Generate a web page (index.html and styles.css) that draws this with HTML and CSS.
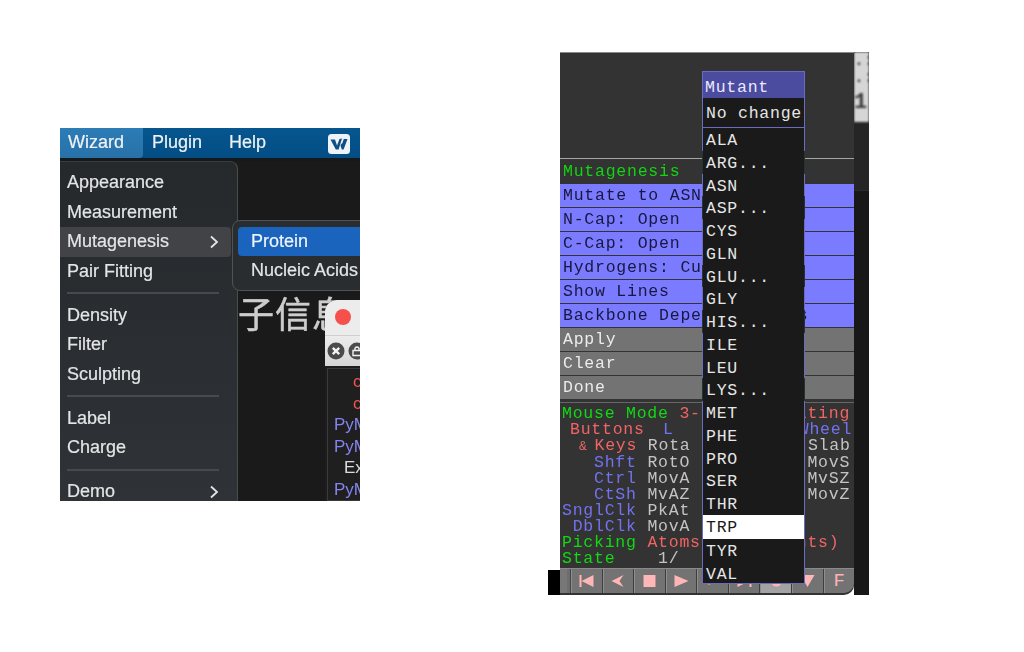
FILE: index.html
```html
<!DOCTYPE html>
<html lang="en">
<head>
<meta charset="utf-8">
<title>PyMOL Mutagenesis Wizard</title>
<link rel="stylesheet" href="styles.css">
</head>
<body>
<section class="shot-left">
  <header class="menubar">
    <span class="bar-item bar-active">Wizard</span>
    <span class="bar-item">Plugin</span>
    <span class="bar-item">Help</span>
    <svg class="wps" viewBox="0 0 22 20" aria-hidden="true">
      <rect width="22" height="20" rx="3.5" fill="#eef3f7"/>
      <path d="M2.5 5.5H7L9 11.5 11.5 5 14 4.6 10.6 15.5H7.8ZM12.4 11 13.8 15.5H15.6L19.5 5H15.8L14.4 9" fill="#0d4f86"/>
    </svg>
  </header>
  <div class="workspace">
    <nav class="menu">
      <div class="menu-item">Appearance</div>
      <div class="menu-item">Measurement</div>
      <div class="menu-item menu-hover">Mutagenesis<svg class="chev" viewBox="0 0 10 14"><path d="M2 1.5 8 7 2 12.5"/></svg></div>
      <div class="menu-item">Pair Fitting</div>
      <div class="menu-sep"></div>
      <div class="menu-item">Density</div>
      <div class="menu-item">Filter</div>
      <div class="menu-item">Sculpting</div>
      <div class="menu-sep"></div>
      <div class="menu-item">Label</div>
      <div class="menu-item">Charge</div>
      <div class="menu-sep"></div>
      <div class="menu-item">Demo<svg class="chev" viewBox="0 0 10 14"><path d="M2 1.5 8 7 2 12.5"/></svg></div>
    </nav>
    <div class="canvas">
      <div class="cjk">子信息</div>
    </div>
    <div class="submenu">
      <div class="sub-item sub-active">Protein</div>
      <div class="sub-item">Nucleic Acids</div>
    </div>
    <div class="mini">
      <div class="mini-title"><span class="dot"></span></div>
      <div class="mini-tools">
        <svg class="round" viewBox="0 0 18 18"><circle cx="9" cy="9" r="8.5" fill="#4a4a4a"/><path d="M5.8 5.8 12.2 12.2M12.2 5.8 5.8 12.2" stroke="#f2f2f2" stroke-width="2.4"/></svg>
        <svg class="round" viewBox="0 0 18 18"><circle cx="9" cy="9" r="8.5" fill="#4a4a4a"/><path d="M5 8.5H13V13.5H5ZM7 8V6.2Q9 3.8 11 6.2V8" fill="none" stroke="#f2f2f2" stroke-width="1.4"/></svg>
      </div>
      <div class="mini-log">
        <div class="log-red">c</div>
        <div class="log-red">c</div>
        <div class="log-blue">PyM</div>
        <div class="log-blue">PyM</div>
        <div class="log-white">Ex</div>
        <div class="log-blue">PyM</div>
      </div>
    </div>
  </div>
</section>

<section class="shot-right">
  <div class="gutter"></div>
  <div class="panel">
    <div class="viewport"></div>
    <div class="wiz-title">Mutagenesis</div>
    <div class="wiz-rows">
      <div class="row row-blue">Mutate to ASN</div>
      <div class="row row-blue">N-Cap: Open</div>
      <div class="row row-blue">C-Cap: Open</div>
      <div class="row row-blue">Hydrogens: Cu</div>
      <div class="row row-blue">Show Lines</div>
      <div class="row row-blue">Backbone Depe        rs</div>
      <div class="row row-gray">Apply</div>
      <div class="row row-gray">Clear</div>
      <div class="row row-gray">Done</div>
    </div>
    <div class="status">
      <div><span class="g">Mouse Mode</span> <span class="r">3-Button Editing</span></div>
      <div class="shift-btn"><span class="r">Buttons</span>  <span class="b nudge">L</span>            <span class="b nudge">Wheel</span></div>
      <div class="shift-key"><span class="amp">&amp;</span> <span class="r">Keys</span> <span class="w">Rota</span>           <span class="w">Slab</span></div>
      <div>   <span class="b">Shft</span> <span class="w">RotO</span>           <span class="w">MovS</span></div>
      <div>   <span class="b">Ctrl</span> <span class="w">MovA</span>           <span class="w">MvSZ</span></div>
      <div>   <span class="b">CtSh</span> <span class="w">MvAZ</span>           <span class="w">MovZ</span></div>
      <div><span class="b">SnglClk</span> <span class="w">PkAt</span></div>
      <div> <span class="b">DblClk</span> <span class="w">MovA</span></div>
      <div><span class="g">Picking</span> <span class="r">Atoms (and Joints)</span></div>
      <div><span class="g">State</span>    <span class="w">1/</span></div>
    </div>
    <div class="transport">
      <div class="handle"></div>
      <div class="tbtn"><svg viewBox="0 0 14 12"><path d="M0 0H2V12H0ZM14 0V12L2 6Z"/></svg></div>
      <div class="tbtn"><svg viewBox="0 0 14 12"><path d="M12 0 8 6 12 12 0 6Z"/></svg></div>
      <div class="tbtn"><svg viewBox="0 0 14 12"><path d="M1 0H13V12H1Z"/></svg></div>
      <div class="tbtn"><svg viewBox="0 0 14 12"><path d="M0 0 14 6 0 12Z"/></svg></div>
      <div class="tbtn"><svg viewBox="0 0 14 12"><path d="M2 2 10 6 2 10Z"/></svg></div>
      <div class="tbtn"><svg viewBox="0 0 14 12"><path d="M0 0 12 6 0 12ZM12 0H14V12H12Z"/></svg></div>
      <div class="tbtn tbtn-on"><svg viewBox="0 0 14 12"><circle cx="7" cy="6" r="5.5"/><circle cx="7" cy="6" r="3" fill="#a3a3a3"/></svg></div>
      <div class="tbtn"><svg viewBox="0 0 14 12"><path d="M0 0H14L7 12Z"/></svg></div>
      <div class="tbtn tbtn-last">F</div>
    </div>
    <div class="popup">
      <div class="pop-head">Mutant</div>
      <div class="pop-none">No change</div>
      <div class="pop-list">
        <div class="pop-item">ALA</div>
        <div class="pop-item more">ARG...</div>
        <div class="pop-item">ASN</div>
        <div class="pop-item more">ASP...</div>
        <div class="pop-item">CYS</div>
        <div class="pop-item">GLN</div>
        <div class="pop-item more">GLU...</div>
        <div class="pop-item">GLY</div>
        <div class="pop-item more">HIS...</div>
        <div class="pop-item">ILE</div>
        <div class="pop-item">LEU</div>
        <div class="pop-item more">LYS...</div>
        <div class="pop-item">MET</div>
        <div class="pop-item">PHE</div>
        <div class="pop-item">PRO</div>
        <div class="pop-item">SER</div>
        <div class="pop-item">THR</div>
        <div class="pop-item pop-sel">TRP</div>
        <div class="pop-item">TYR</div>
        <div class="pop-item">VAL</div>
      </div>
    </div>
  </div>
  <aside class="strip">
    <div class="strip-light"><span>.:c</span><span>.:c</span><span class="big">1:</span></div>
    <div class="strip-mid"></div>
  </aside>
</section>
</body>
</html>
```
FILE: styles.css
```css
* { box-sizing: border-box; }
html, body { margin: 0; height: 100%; background: #fff; }
body { display: flex; align-items: flex-start; overflow: hidden; }

/* left screenshot */
.shot-left {
  position: relative;
  width: 300px;
  height: 373px;
  margin: 128px 0 0 60px;
  display: flex;
  flex-direction: column;
  overflow: hidden;
  background: #1b1b1b;
  font-family: "Liberation Sans", Arial, sans-serif;
  color: #e4e5e6;
  -webkit-text-stroke: .2px;
  filter: blur(.35px);
}
.menubar {
  flex: none;
  height: 33px;
  display: flex;
  align-items: flex-start;
  background: linear-gradient(#06568f, #034d84);
  border-bottom: 3px solid #16191c;
  font-size: 18px;
}
.bar-item { height: 30px; line-height: 28px; padding: 0 8px; color: #eef2f6; }
.bar-active {
  width: 83px;
  background: linear-gradient(#2c7cb6, #2871a8);
  border-bottom-right-radius: 4px;
}
.bar-item:nth-child(2) { padding-left: 9px; width: 77px; }
.bar-item:nth-child(3) { padding-left: 9px; }
.wps { width: 22px; height: 20px; margin: 6px 0 0 54px; flex: none; }

.workspace { position: relative; flex: 1; display: flex; min-height: 0; }
.menu {
  flex: none;
  width: 178px;
  padding-top: 6px;
  background: linear-gradient(#26292c, #2f3236);
  border-right: 1px solid #4a4c4e;
  border-top: 1px solid #3a3c3e;
  border-top-right-radius: 8px;
}
.menu-item {
  height: 29.5px;
  line-height: 29.5px;
  padding-left: 7px;
  font-size: 18px;
  display: flex;
  align-items: center;
  justify-content: space-between;
}
.menu-hover { background: #414346; margin-right: 6px; border-radius: 0 4px 4px 0; }
.chev { width: 10px; height: 14px; margin-right: 12px; }
.menu-hover .chev { margin-right: 12px; }
.menu-item:not(.menu-hover) .chev { margin-right: 18px; }
.chev path { fill: none; stroke: #e4e5e6; stroke-width: 1.8; }
.menu-sep { height: 14.5px; margin: 0 18px 0 7px; position: relative; }
.menu-sep::after {
  content: "";
  position: absolute;
  left: 0; right: 0; top: 6px;
  height: 2px;
  background: #484b4e;
}
.canvas { flex: 1; padding-top: 131px; background: #1a1a1a; }
.cjk {
  font: 36px/40px "Noto Sans CJK SC", sans-serif;
  color: #cdcdcd;
  white-space: nowrap;
  letter-spacing: 1px;
  -webkit-text-stroke: .5px;
}
.submenu {
  position: absolute;
  left: 172px;
  top: 59px;
  width: 140px;
  height: 71px;
  padding: 6px 0 0 5px;
  background: #2a2d30;
  border: 1px solid #505254;
  border-radius: 8px;
  font-size: 18px;
}
.sub-item { height: 29px; line-height: 29px; padding-left: 13px; white-space: nowrap; }
.sub-active { background: #1a64bd; border-radius: 4px; color: #f0f4fa; }
.mini {
  position: absolute;
  left: 265px;
  top: 139px;
  width: 60px;
  bottom: 0;
  display: flex;
  flex-direction: column;
  background: #1d1d1d;
  border-top-left-radius: 12px;
  overflow: hidden;
}
.mini-title {
  flex: none;
  height: 36px;
  padding: 9px 0 0 10px;
  background: #ececec;
  border-bottom: 1px solid #cfcfcf;
}
.dot { display: block; width: 16px; height: 16px; border-radius: 50%; background: #f6504c; }
.mini-tools {
  flex: none;
  height: 30px;
  padding: 6px 0 0 2px;
  display: flex;
  gap: 3px;
  background: linear-gradient(#ececec, #d6d6d6);
}
.round { flex: none; width: 18px; height: 18px; }
.mini-log {
  flex: 1;
  margin: 2px 0 0 2px;
  padding: 2px 0 0 6px;
  background: #1f1f1f;
  border: 1px solid #3a3a3a;
  font-size: 17px;
  line-height: 21.5px;
  -webkit-text-stroke: 0;
}
.log-red { color: #f25252; padding-left: 19px; }
.log-blue { color: #8484f0; }
.log-white { color: #dcdcdc; padding-left: 10px; }

/* right screenshot */
.shot-right {
  width: 321px;
  height: 543px;
  margin: 52px 0 0 188px;
  display: flex;
  font-family: "Liberation Mono", "DejaVu Sans Mono", monospace;
  font-size: 16.5px;
  letter-spacing: .77px;
  filter: blur(.35px);
}
.gutter { flex: none; width: 12px; margin-top: 518px; height: 25px; background: #000; }
.panel {
  position: relative;
  flex: none;
  width: 294px;
  display: flex;
  flex-direction: column;
  background: #333;
  border-top: 1px solid #8a8a8a;
  border-bottom-right-radius: 10px;
}
.viewport { flex: none; height: 106px; border-bottom: 1px solid #a6a6a6; }
.wiz-title { flex: none; height: 25px; line-height: 26px; padding-left: 3px; color: #12d412; }
.wiz-rows { flex: none; display: flex; flex-direction: column; gap: 1px; }
.row { height: 23px; line-height: 24px; padding-left: 3px; white-space: pre; }
.row-blue { background: #7b7bff; color: #17173f; }
.row-gray { background: #737373; color: #ececec; }
.status {
  flex: none;
  margin-top: 3px;
  padding: 3px 0 0 2px;
  height: 166px;
  line-height: 16px;
  border-top: 1px solid #666;
}
.status > div { white-space: pre; }
.status > .shift-btn { padding-left: 8px; }
.status > .shift-key { padding-left: 17px; }
.nudge { margin-left: -3px; }
.amp { color: #f06a6a; font-size: 13px; letter-spacing: 0; margin-right: -3px; }
.g { color: #12d912; }
.r { color: #f26464; }
.b { color: #7272f0; }
.w { color: #c4c4c4; }
.transport {
  flex: none;
  height: 25px;
  display: flex;
  align-items: stretch;
  background: #4c4c4c;
  border-top: 1px solid #8a8a8a;
  border-bottom-right-radius: 10px;
  overflow: hidden;
}
.handle {
  flex: none;
  width: 11px;
  background: #6d6d6d;
  border-left: 7px solid #777;
  border-right: 1px solid #444;
}
.tbtn {
  flex: 1;
  display: flex;
  align-items: center;
  justify-content: center;
  background: #737373;
  border-right: 1px solid #3e3e3e;
  border-left: 1px solid #8e8e8e;
  color: #ffb3b3;
  font-size: 19px;
  letter-spacing: 0;
}
.tbtn svg { width: 15px; height: 12px; fill: #ffb6b6; }
.tbtn-on { background: #a3a3a3; }
.tbtn-last { border-right: 0; }
.popup {
  position: absolute;
  left: 142px;
  top: 18px;
  width: 103px;
  height: 513px;
  display: flex;
  flex-direction: column;
  background: #1a1a1a;
  border: 1px solid #6b6bc0;
  color: #e6e6e6;
}
.pop-head { flex: none; height: 26px; line-height: 32px; padding-left: 2px; background: #4b4b9f; color: #eaeaff; }
.pop-none { flex: none; height: 29px; line-height: 31px; padding-left: 3px; }
.pop-list { flex: 1; border-top: 1px solid #6b6bc0; }
.pop-item { height: 22.75px; line-height: 25px; padding-left: 3px; }
.pop-sel { background: #fff; color: #1a1a1a; height: 24px; }
.more { box-shadow: 1px 0 #26332e, -1px 0 #26332e; }
.strip {
  flex: none;
  width: 15px;
  display: flex;
  flex-direction: column;
  background: #181818;
  overflow: hidden;
}
.strip-light {
  flex: none;
  height: 70px;
  display: flex;
  flex-direction: column;
  background: #d6d6d6;
  color: #3a3a3a;
  letter-spacing: 0;
  font-weight: bold;
  line-height: 17px;
  filter: blur(1px);
}
.strip-light .big { font-size: 22px; line-height: 34px; }
.strip-mid { flex: none; height: 69px; background: #252525; border-bottom: 1px solid #2c2c2c; }
```
